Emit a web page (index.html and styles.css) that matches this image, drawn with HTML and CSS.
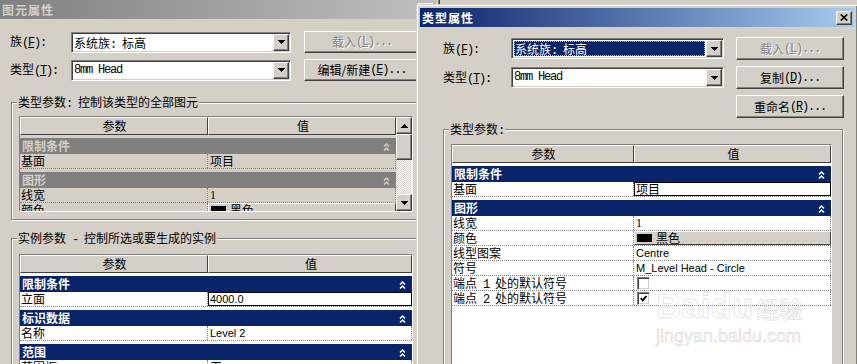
FILE: index.html
```html
<!DOCTYPE html>
<html lang="zh-CN">
<head>
    <meta charset="UTF-8">
    <title>类型属性</title>
    <link rel="stylesheet" href="styles.css">
</head>
<body>
<div class="desk">

    <!-- 后面的窗口：图元属性 -->
    <div class="win win-back">
        <div class="titlebar off">
            <span class="ttl">图元属性</span>
            <span class="xbtn"><svg width="8" height="7" viewBox="0 0 8 7"><path d="M0.8 0.5L7.2 6.5M7.2 0.5L0.8 6.5" stroke="#000" stroke-width="1.7"/></svg></span>
        </div>

        <div class="picker pk-back">
            <span class="lbl">族<span class="hw">(<u>F</u>):</span></span>
            <div class="combo">
                <span class="ctext">系统族<span class="hw">: </span>标高</span>
                <span class="drop"><svg width="7" height="4"><path d="M0 0h7v1H0zM1 1h5v1H1zM2 2h3v1H2zM3 3h1v1H3z"/></svg></span>
            </div>
            <span class="btn dis">载入<span class="hw">(<u>L</u>)...</span></span>

            <span class="lbl">类型<span class="hw">(<u>T</u>):</span></span>
            <div class="combo">
                <span class="ctext mono">8mm Head</span>
                <span class="drop"><svg width="7" height="4"><path d="M0 0h7v1H0zM1 1h5v1H1zM2 2h3v1H2zM3 3h1v1H3z"/></svg></span>
            </div>
            <span class="btn">编辑/新建<span class="hw">(<u>E</u>)...</span></span>
        </div>

        <div class="group g-left g1">
            <div class="gtitle">类型参数<span class="hw">: </span>控制该类型的全部图元</div>
            <div class="grid off lt">
                <div class="gmain">
                    <div class="ghd"><span class="hc k">参数</span><span class="hc v">值</span></div>
                    <div class="cat"><span>限制条件</span><svg width="7" height="9"><path d="M1 4.5L3.5 2L6 4.5M1 8.5L3.5 6L6 8.5" fill="none" stroke="#d4d0c8" stroke-width="1.5"/></svg></div>
                    <div class="row"><span class="k">基面</span><span class="v">项目</span></div>
                    <div class="cat"><span>图形</span><svg width="7" height="9"><path d="M1 4.5L3.5 2L6 4.5M1 8.5L3.5 6L6 8.5" fill="none" stroke="#d4d0c8" stroke-width="1.5"/></svg></div>
                    <div class="row"><span class="k">线宽</span><span class="v num">1</span></div>
                    <div class="row"><span class="k">颜色</span><span class="v cbtn"><i class="swatch"></i>黑色</span></div>
                </div>
                <div class="sbar">
                    <span class="sbtn"><svg width="7" height="4"><path d="M3 0h1v1H3zM2 1h3v1H2zM1 2h5v1H1zM0 3h7v1H0z"/></svg></span>
                    <span class="thumb"></span>
                    <span class="track"></span>
                    <span class="sbtn"><svg width="7" height="4"><path d="M0 0h7v1H0zM1 1h5v1H1zM2 2h3v1H2zM3 3h1v1H3z"/></svg></span>
                </div>
            </div>
        </div>

        <div class="group g-left g2">
            <div class="gtitle">实例参数<span class="hw"> - </span>控制所选或要生成的实例</div>
            <div class="grid li">
                <div class="ghd"><span class="hc k">参数</span><span class="hc v">值</span></div>
                <div class="cat"><span>限制条件</span><svg width="7" height="9"><path d="M1 4.5L3.5 2L6 4.5M1 8.5L3.5 6L6 8.5" fill="none" stroke="#fff" stroke-width="1.5"/></svg></div>
                <div class="row"><span class="k">立面</span><span class="v edit lat">4000.0</span></div>
                <div class="cat"><span>标识数据</span><svg width="7" height="9"><path d="M1 4.5L3.5 2L6 4.5M1 8.5L3.5 6L6 8.5" fill="none" stroke="#fff" stroke-width="1.5"/></svg></div>
                <div class="row"><span class="k">名称</span><span class="v lat">Level 2</span></div>
                <div class="cat"><span>范围</span><svg width="7" height="9"><path d="M1 4.5L3.5 2L6 4.5M1 8.5L3.5 6L6 8.5" fill="none" stroke="#fff" stroke-width="1.5"/></svg></div>
                <div class="row"><span class="k">范围框</span><span class="v">无</span></div>
            </div>
        </div>
    </div>

    <!-- 前面的窗口：类型属性 -->
    <div class="win win-front">
        <div class="titlebar">
            <span class="ttl">类型属性</span>
            <span class="xbtn"><svg width="8" height="7" viewBox="0 0 8 7"><path d="M0.8 0.5L7.2 6.5M7.2 0.5L0.8 6.5" stroke="#000" stroke-width="1.7"/></svg></span>
        </div>

        <div class="picker pk-front">
            <span class="lbl">族<span class="hw">(<u>F</u>):</span></span>
            <div class="combo">
                <span class="ctext sel">系统族<span class="hw">: </span>标高</span>
                <span class="drop"><svg width="7" height="4"><path d="M0 0h7v1H0zM1 1h5v1H1zM2 2h3v1H2zM3 3h1v1H3z"/></svg></span>
            </div>
            <span class="btn dis">载入<span class="hw">(<u>L</u>)...</span></span>

            <span class="lbl">类型<span class="hw">(<u>T</u>):</span></span>
            <div class="combo">
                <span class="ctext mono">8mm Head</span>
                <span class="drop"><svg width="7" height="4"><path d="M0 0h7v1H0zM1 1h5v1H1zM2 2h3v1H2zM3 3h1v1H3z"/></svg></span>
            </div>
            <span class="btn">复制<span class="hw">(<u>D</u>)...</span></span>

            <span class="btn third">重命名<span class="hw">(<u>R</u>)...</span></span>
        </div>

        <div class="group g-right">
            <div class="gtitle">类型参数<span class="hw">:</span></div>
            <div class="grid rt">
                <div class="ghd"><span class="hc k">参数</span><span class="hc v">值</span></div>
                <div class="cat"><span>限制条件</span><svg width="7" height="9"><path d="M1 4.5L3.5 2L6 4.5M1 8.5L3.5 6L6 8.5" fill="none" stroke="#fff" stroke-width="1.5"/></svg></div>
                <div class="row"><span class="k">基面</span><span class="v edit">项目</span></div>
                <div class="cat"><span>图形</span><svg width="7" height="9"><path d="M1 4.5L3.5 2L6 4.5M1 8.5L3.5 6L6 8.5" fill="none" stroke="#fff" stroke-width="1.5"/></svg></div>
                <div class="row"><span class="k">线宽</span><span class="v num">1</span></div>
                <div class="row"><span class="k">颜色</span><span class="v cbtn"><i class="swatch"></i>黑色</span></div>
                <div class="row"><span class="k">线型图案</span><span class="v lat">Centre</span></div>
                <div class="row"><span class="k">符号</span><span class="v lat">M_Level Head - Circle</span></div>
                <div class="row"><span class="k">端点<span class="hw"> 1 </span>处的默认符号</span><span class="v"><i class="chk"></i></span></div>
                <div class="row"><span class="k">端点<span class="hw"> 2 </span>处的默认符号</span><span class="v"><i class="chk"><svg width="7" height="7"><path d="M0.8 3.2L2.8 5.4L6.4 1" fill="none" stroke="#000" stroke-width="1.8"/></svg></i></span></div>
            </div>
        </div>
    </div>

    <!-- 水印 -->
    <div class="mark">
        <div class="mk1">Baidu<span class="cn">经验</span></div>
        <div class="mk2">jingyan.baidu.com</div>
    </div>
</div>
</body>
</html>
```

FILE: styles.css
```css
* {
    margin: 0;
    padding: 0;
    box-sizing: border-box;
}
body {
    background: #d4d0c8;
    font: 12px/14px "Noto Sans CJK SC", "Liberation Sans", sans-serif;
    color: #000;
    overflow: hidden;
}
u {
    text-underline-offset: 1px;
}
.desk {
    position: relative;
    width: 857px;
    height: 364px;
    overflow: hidden;
}

/* 窗口 */
.win {
    position: absolute;
    background: #d4d0c8;
    border: 1px solid;
    border-color: #d4d0c8 #404040 #404040 #d4d0c8;
    box-shadow: inset 1px 1px #fff, inset -1px -1px #808080;
    padding: 3px;
}
.win-back {
    left: -4px;
    top: -4px;
    width: 444px;
    height: 390px;
}
.win-front {
    left: 416px;
    top: 4px;
    width: 442px;
    height: 380px;
}
.titlebar {
    display: flex;
    align-items: center;
    justify-content: space-between;
    height: 19px;
    padding: 0 2px;
    background: linear-gradient(to right, #0a246a, #a6caf0);
    color: #fff;
    font-weight: bold;
    letter-spacing: 1px;
}
.titlebar.off {
    background: linear-gradient(to right, #808080, #c0c0c0);
    color: #d4d0c8;
}
.xbtn {
    display: flex;
    align-items: center;
    justify-content: center;
    width: 16px;
    height: 14px;
    background: #d4d0c8;
    border: 1px solid;
    border-color: #fff #404040 #404040 #fff;
    box-shadow: inset -1px -1px #808080;
}

/* 半角字符 */
.hw {
    font-family: "Liberation Mono", monospace;
    letter-spacing: -1.2px;
    white-space: pre;
}
.mono {
    font-family: "Liberation Mono", monospace;
    letter-spacing: -1.2px;
}
.lat {
    font-family: "Liberation Sans", sans-serif;
    font-size: 11px;
}
.num {
    font-family: "Liberation Serif", serif;
}

/* 族 / 类型 选择 */
.picker {
    display: grid;
    align-items: center;
    row-gap: 6px;
}
.pk-back {
    grid-template-columns: 61px 233px 116px;
    grid-auto-rows: 22px;
    margin: 12px 0 0 10px;
}
.pk-back .combo {
    width: 220px;
}
.pk-front {
    grid-template-columns: 68px 225px 108px;
    grid-auto-rows: 23px;
    margin: 10px 0 0 23px;
}
.pk-front .combo {
    width: 213px;
}
.pk-front .third {
    grid-column: 3;
}
.combo {
    display: flex;
    height: 21px;
    padding: 1px;
    background: #fff;
    border: 1px solid;
    border-color: #808080 #fff #fff #808080;
    box-shadow: inset 1px 1px #404040, inset -1px -1px #d4d0c8;
}
.ctext {
    flex: 1;
    padding-left: 1px;
    line-height: 17px;
    white-space: nowrap;
}
.ctext.sel {
    margin: 1px;
    padding-left: 0;
    line-height: 13px;
    background: #0a246a;
    color: #fff;
    border: 1px dotted #c8c07a;
}
.drop,
.sbtn {
    display: flex;
    align-items: center;
    justify-content: center;
    width: 16px;
    height: 17px;
    background: #d4d0c8;
    border: 1px solid;
    border-color: #fff #404040 #404040 #fff;
    box-shadow: inset -1px -1px #808080;
}
.btn {
    display: flex;
    align-items: center;
    justify-content: center;
    height: 100%;
    background: #d4d0c8;
    border: 1px solid;
    border-color: #fff #404040 #404040 #fff;
    box-shadow: inset -1px -1px #808080;
    white-space: nowrap;
}
.btn.dis {
    color: #808080;
    text-shadow: 1px 1px #fff;
}

/* 分组框 */
.group {
    border: 1px solid #808080;
    box-shadow: inset 1px 1px #fff, 1px 1px #fff;
    padding: 0 7px 7px;
}
.gtitle {
    display: table;
    margin: -8px 0 0 -2px;
    padding: 0 1px;
    background: #d4d0c8;
}
.g-left {
    width: 410px;
    margin-left: 11px;
}
.g1 {
    margin-top: 21px;
}
.g1 .grid {
    margin-top: 5px;
}
.g2 {
    margin-top: 18px;
}
.g2 .grid {
    margin-top: 7px;
}
.g-right {
    width: 400px;
    margin: 11px 0 0 23px;
    padding-right: 10px;
}
.g-right .grid {
    margin-top: 6px;
}

/* 参数表 */
.grid {
    --kw: 188px;
    border: 1px solid;
    border-color: #808080 #fff #fff #808080;
    background: #fff;
    overflow: hidden;
}
.grid.lt {
    display: flex;
    height: 96px;
    background: #d4d0c8;
}
.grid.li {
    height: 140px;
}
.grid.rt {
    --kw: 182px;
    height: 240px;
}
.gmain {
    flex: 1;
}
.ghd {
    display: flex;
    height: 18px;
}
.hc {
    background: #d4d0c8;
    border: 1px solid;
    border-color: #fff #404040 #404040 #fff;
    text-align: center;
    line-height: 16px;
}
.cat {
    display: flex;
    align-items: center;
    justify-content: space-between;
    height: 16px;
    margin-top: 3px;
    padding: 0 6px 0 2px;
    background: #0a246a;
    color: #fff;
    font-weight: bold;
}
.off .cat {
    background: #808080;
    color: #d4d0c8;
}
.row {
    display: flex;
    height: 15px;
    border-bottom: 1px dotted #808080;
    line-height: 14px;
}
.k {
    flex: none;
    width: var(--kw);
    padding-left: 1px;
    border-right: 1px dotted #808080;
    white-space: nowrap;
}
.hc.k {
    border-right: 1px solid #404040;
}
.v {
    flex: 1;
    padding-left: 2px;
    border-right: 1px dotted #808080;
    white-space: nowrap;
}
.hc.v {
    border-right: 1px solid #404040;
}
.v.edit {
    padding-left: 1px;
    background: #fff;
    border: 1px solid #000;
    line-height: 12px;
}
.v.cbtn {
    display: flex;
    align-items: center;
    gap: 4px;
    background: #d4d0c8;
    border: 1px solid;
    border-color: #fff #404040 #404040 #fff;
    line-height: 12px;
}
.swatch {
    width: 15px;
    height: 8px;
    background: #000;
}
.chk {
    display: flex;
    align-items: center;
    justify-content: center;
    width: 13px;
    height: 13px;
    margin: 1px 0 0 1px;
    background: #fff;
    border: 1px solid;
    border-color: #808080 #fff #fff #808080;
    box-shadow: inset 1px 1px #404040, inset -1px -1px #d4d0c8;
}

/* 滚动条 */
.sbar {
    display: flex;
    flex-direction: column;
    width: 16px;
}
.thumb {
    height: 26px;
    background: #d4d0c8;
    border: 1px solid;
    border-color: #fff #404040 #404040 #fff;
    box-shadow: inset -1px -1px #808080;
}
.track {
    flex: 1;
    background: repeating-conic-gradient(#fff 0 25%, #d4d0c8 0 50%) 0 0 / 2px 2px;
}

/* 水印 */
.mark {
    position: absolute;
    left: 656px;
    top: 288px;
    font-family: "Liberation Sans", sans-serif;
    font-weight: bold;
    color: rgba(255, 255, 255, 0.35);
    -webkit-text-stroke: 1px rgba(0, 0, 0, 0.13);
    pointer-events: none;
}
.mk1 {
    font-size: 35px;
    line-height: 36px;
}
.mk1 .cn {
    font-family: "Noto Sans CJK SC", sans-serif;
    font-size: 23px;
    margin-left: 3px;
}
.mk2 {
    font-size: 18px;
    line-height: 20px;
    font-weight: normal;
}
```
